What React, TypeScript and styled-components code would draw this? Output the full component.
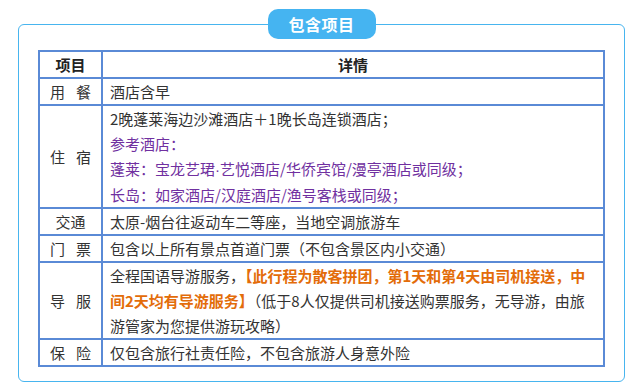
import React from "react";
import styled, { createGlobalStyle } from "styled-components";

const GlobalStyle = createGlobalStyle`
  html, body {
    margin: 0;
    padding: 0;
    background: #ffffff;
  }
  body {
    font-family: "Noto Sans CJK SC", "Noto Sans", sans-serif;
    color: #333333;
  }
`;

const Page = styled.div`
  padding: 24px 16px 10px 18px;
`;

const Card = styled.section`
  position: relative;
  box-sizing: border-box;
  width: 607px;
  height: 358px;
  padding: 25px 19px 0 19px;
  border: 1px solid #48b5ef;
  border-radius: 6px;
`;

const Tab = styled.div`
  position: absolute;
  top: -16px;
  left: 50%;
  transform: translateX(-50%);
  width: 108px;
  height: 30px;
  display: flex;
  align-items: center;
  justify-content: center;
  border-radius: 10px;
  background-color: #45b4f1;
  color: #ffffff;
  font-size: 16px;
  font-weight: 700;
  letter-spacing: 0.5px;
`;

const Table = styled.table`
  width: 567px;
  border-collapse: collapse;
  table-layout: fixed;
  border: 2px solid #5a8ad6;
  font-size: 15px;
  line-height: 25px;
`;

const Cell = styled.td<{ $head?: boolean; $center?: boolean }>`
  border: 2px solid #5a8ad6;
  padding: 0 7px;
  vertical-align: middle;
  text-align: ${(p) => (p.$center ? "center" : "left")};
  font-weight: ${(p) => (p.$head ? 700 : 400)};
  color: ${(p) => (p.$head ? "#222222" : "#333333")};
`;

const LabelCell = styled(Cell)`
  padding: 0;
`;

const Label = styled.span<{ $spaced?: boolean }>`
  display: flex;
  justify-content: center;
  gap: ${(p) => (p.$spaced ? "11px" : "0")};
`;

const Line = styled.div<{ $tone?: "purple" }>`
  color: ${(p) => (p.$tone === "purple" ? "#7030a0" : "inherit")};
`;

const Dot = styled.span`
  font-family: "Liberation Sans", sans-serif;
`;

const Highlight = styled.span`
  color: #e36c09;
  font-weight: 700;
`;

const Item: React.FC<{ text: string; spaced?: boolean }> = ({ text, spaced }) => (
  <LabelCell>
    <Label $spaced={spaced}>
      {text.split("").map((ch, i) => (
        <span key={i}>{ch}</span>
      ))}
    </Label>
  </LabelCell>
);

const App: React.FC = () => {
  return (
    <Page>
      <GlobalStyle />
      <Card>
        <Tab>包含项目</Tab>
        <Table>
          <colgroup>
            <col style={{ width: "63px" }} />
            <col />
          </colgroup>
          <tbody>
            <tr>
              <Cell $head $center>
                项目
              </Cell>
              <Cell $head $center>
                详情
              </Cell>
            </tr>
            <tr>
              <Item text="用餐" spaced />
              <Cell>酒店含早</Cell>
            </tr>
            <tr>
              <Item text="住宿" spaced />
              <Cell>
                <Line>2晚蓬莱海边沙滩酒店＋1晚长岛连锁酒店；</Line>
                <Line $tone="purple">参考酒店：</Line>
                <Line $tone="purple">
                  蓬莱：宝龙艺珺<Dot>·</Dot>艺悦酒店/华侨宾馆/漫亭酒店或同级；
                </Line>
                <Line $tone="purple">长岛：如家酒店/汉庭酒店/渔号客栈或同级；</Line>
              </Cell>
            </tr>
            <tr>
              <Item text="交通" />
              <Cell>太原-烟台往返动车二等座，当地空调旅游车</Cell>
            </tr>
            <tr>
              <Item text="门票" spaced />
              <Cell>包含以上所有景点首道门票（不包含景区内小交通）</Cell>
            </tr>
            <tr>
              <Item text="导服" spaced />
              <Cell>
                <span>全程国语导游服务，</span>
                <Highlight>【此行程为散客拼团，第1天和第4天由司机接送，中</Highlight>
                <Highlight>间2天均有导游服务】</Highlight>
                <span>（低于8人仅提供司机接送购票服务，无导游，由旅</span>
                <span>游管家为您提供游玩攻略）</span>
              </Cell>
            </tr>
            <tr>
              <Item text="保险" spaced />
              <Cell>仅包含旅行社责任险，不包含旅游人身意外险</Cell>
            </tr>
          </tbody>
        </Table>
      </Card>
    </Page>
  );
};

export default App;
